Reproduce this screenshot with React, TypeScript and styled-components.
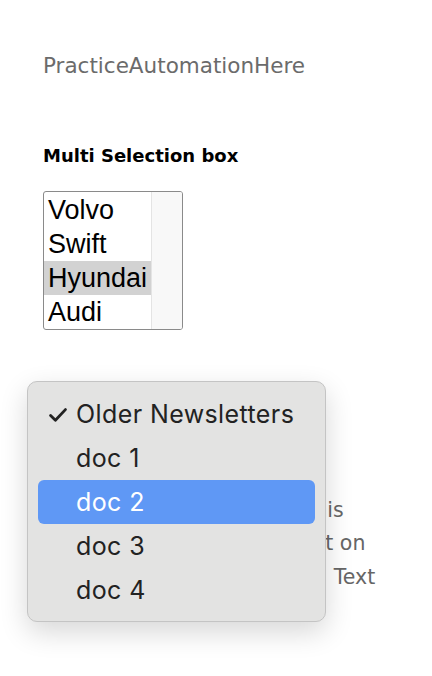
import React from 'react'
import styled, { createGlobalStyle } from 'styled-components'

const GlobalStyle = createGlobalStyle`
    html, body {
        margin: 0;
        padding: 0;
        background: #ffffff;
    }
`

const cars = ['Volvo', 'Swift', 'Hyundai', 'Audi']
const docs = ['Older Newsletters', 'doc 1', 'doc 2', 'doc 3', 'doc 4']
const paraLines = [
    { text: 'Double click on a button, this' },
    { text: 'will show you an alert, tap it on' },
    { text: 'the popup window, and the', tail: 'Text' },
    { text: 'then copy it.' },
]

export default function App() {
    return (
        <Page>
            <GlobalStyle />
            <SiteTitle>PracticeAutomationHere</SiteTitle>

            <SectionTitle>Multi Selection box</SectionTitle>

            <ListBox>
                <ListOptions>
                    {cars.map(car => (
                        <ListOption key={car} selected={car === 'Hyundai'}>
                            {car}
                        </ListOption>
                    ))}
                </ListOptions>
                <ScrollTrack />
            </ListBox>

            <Paragraph>
                {paraLines.map(line => (
                    <ParaLine key={line.text}>
                        {line.text}
                        {line.tail && <TailWord>{line.tail}</TailWord>}
                    </ParaLine>
                ))}
            </Paragraph>

            <PopupMenu>
                {docs.map((doc, i) => (
                    <MenuItem key={doc} highlighted={doc === 'doc 2'}>
                        {i === 0 && (
                            <Check viewBox="0 0 18 14">
                                <path d="M1.6 7.6 L6.4 12.3 L16.4 1.6" />
                            </Check>
                        )}
                        {doc}
                    </MenuItem>
                ))}
            </PopupMenu>
        </Page>
    )
}

const Page = styled.div`
    position: relative;
    height: 676px;
    padding: 52px 0 0 43px;
    box-sizing: border-box;
    font-family: 'DejaVu Sans', Verdana, sans-serif;
    overflow: hidden;
`

const SiteTitle = styled.div`
    font-size: 21.5px;
    line-height: 28px;
    color: #6b6b6b;
`

const SectionTitle = styled.h3`
    margin: 65px 0 0 0;
    font-size: 18px;
    line-height: 22px;
    font-weight: bold;
    color: #000000;
`

const ListBox = styled.div`
    display: flex;
    width: 140px;
    height: 139px;
    margin-top: 24px;
    border: 1px solid #8a8a8a;
    border-radius: 3px;
    box-sizing: border-box;
    overflow: hidden;
`

const ListOptions = styled.div`
    flex: 1;
    display: flex;
    flex-direction: column;
    padding-top: 1px;
`

const ListOption = styled.div<{ selected?: boolean }>`
    height: 34px;
    line-height: 34px;
    padding-left: 4px;
    font-family: 'Liberation Sans', Arial, sans-serif;
    font-size: 27px;
    color: #000000;
    background: ${props => props.selected ? '#d2d2d2' : 'transparent'};
`

const ScrollTrack = styled.div`
    width: 30px;
    background: #f8f8f8;
    border-left: 1px solid #e4e4e4;
`

const Paragraph = styled.div`
    margin-top: 163.5px;
    color: #666666;
    font-size: 20.5px;
    line-height: 33.5px;
`

const ParaLine = styled.div`
    white-space: nowrap;
`

const TailWord = styled.span`
    margin-left: 10px;
`

const PopupMenu = styled.div`
    position: absolute;
    left: 27px;
    top: 381px;
    width: 299px;
    height: 241px;
    box-sizing: border-box;
    padding: 10px;
    background: #e3e3e2;
    border: 1px solid #c4c4c4;
    border-radius: 10px;
    box-shadow: 0 10px 28px rgba(0, 0, 0, 0.16);
    display: flex;
    flex-direction: column;
`

const MenuItem = styled.div<{ highlighted?: boolean }>`
    position: relative;
    height: 44px;
    line-height: 44px;
    padding-left: 38px;
    border-radius: 6px;
    font-family: Inter, 'Noto Sans', sans-serif;
    font-size: 25px;
    letter-spacing: 0.4px;
    color: ${props => props.highlighted ? '#ffffff' : '#222222'};
    background: ${props => props.highlighted ? '#5f98f5' : 'transparent'};
`

const Check = styled.svg`
    position: absolute;
    left: 11px;
    top: 16px;
    width: 18px;
    height: 14px;
    fill: none;
    stroke: #222222;
    stroke-width: 2.8;
    stroke-linecap: round;
    stroke-linejoin: round;
`
